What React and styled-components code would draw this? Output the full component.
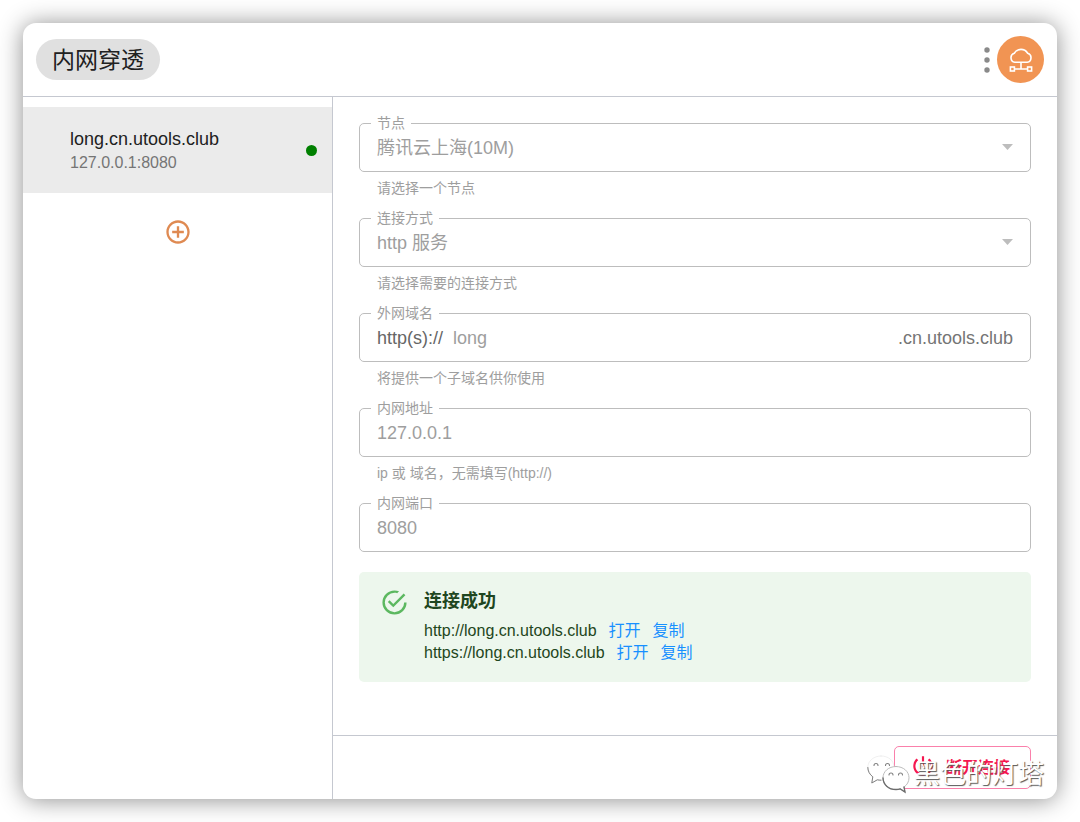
import React from 'react';
import styled, { createGlobalStyle } from 'styled-components';

const GlobalStyle = createGlobalStyle`
  * {
    box-sizing: border-box;
  }

  body {
    margin: 0;
    background: #fff;
    color: #212121;
    font-family: "Liberation Sans", "Noto Sans CJK SC", sans-serif;
    font-size: 16px;
  }

  button, input, select {
    font-family: inherit;
  }
`;

const Page = styled.div`
  min-height: 100vh;
  padding: 23px;
  display: flex;
`;

const Window = styled.div`
  position: relative;
  flex: 1;
  display: flex;
  flex-direction: column;
  background: #fff;
  border-radius: 13px;
  box-shadow: 0 1px 24px rgba(0, 0, 0, 0.45);
`;

const Header = styled.header`
  display: flex;
  justify-content: space-between;
  align-items: center;
  height: 74px;
  padding: 0 13px;
  border-bottom: 1px solid #c5c8d0;
`;

const Title = styled.h1`
  margin: 0;
  padding: 1px 16px 0;
  border-radius: 21px;
  background: #e0e0e0;
  font-size: 23px;
  font-weight: 400;
  line-height: 40px;
`;

const HeaderActions = styled.div`
  display: flex;
  align-items: center;
  gap: 6px;
`;

const IconButton = styled.button`
  display: flex;
  padding: 0;
  border: none;
  background: none;
  color: ${props => props.$color};
  cursor: pointer;
`;

const Avatar = styled.div`
  display: flex;
  align-items: center;
  justify-content: center;
  width: 47px;
  height: 47px;
  border-radius: 50%;
  background: #f19453;
`;

const Body = styled.div`
  flex: 1;
  display: flex;
`;

const Sidebar = styled.nav`
  flex: 0 0 310px;
  display: flex;
  flex-direction: column;
  align-items: center;
  padding-top: 10px;
  border-right: 1px solid #c5c8d0;
`;

const Tunnel = styled.button`
  display: flex;
  justify-content: space-between;
  align-items: center;
  width: 100%;
  height: 86px;
  margin-bottom: 25px;
  padding: 0 15px 0 47px;
  border: none;
  background: #ebebeb;
  color: #212121;
  text-align: left;
  cursor: pointer;
`;

const TunnelName = styled.span`
  display: block;
  font-size: 18px;
  line-height: 26px;
`;

const TunnelTarget = styled.span`
  display: block;
  color: #757575;
  font-size: 16px;
  line-height: 22px;
`;

const StatusDot = styled.span`
  width: 11px;
  height: 11px;
  border-radius: 50%;
  background: #008000;
`;

const Panel = styled.main`
  flex: 1;
  min-width: 0;
  display: flex;
  flex-direction: column;
`;

const Form = styled.form`
  flex: 1;
  padding: 16px 26px;
`;

const Field = styled.div`
  margin-bottom: 10px;
`;

const Outline = styled.fieldset`
  min-width: 0;
  margin: 0;
  padding: 1px 17px 9px 11px;
  border: 1px solid #bdbdbd;
  border-radius: 5px;
`;

const Legend = styled.legend`
  padding: 0 6px;
  color: #9e9e9e;
  font-size: 14px;
  line-height: 20px;
`;

const Control = styled.div`
  display: flex;
  align-items: center;
  gap: 10px;
  padding-left: 6px;
  font-size: 18px;
  line-height: 28px;
`;

const Input = styled.input`
  flex: 1;
  min-width: 0;
  height: 28px;
  padding: 0;
  border: none;
  outline: none;
  background: none;
  color: #9e9e9e;
  font-size: 18px;
`;

const SelectBox = styled.div`
  flex: 1;
  display: grid;
  align-items: center;

  > * {
    grid-area: 1 / 1;
  }

  svg {
    justify-self: end;
    margin-bottom: 2px;
    pointer-events: none;
  }
`;

const Select = styled.select`
  width: 100%;
  height: 28px;
  padding: 0;
  border: none;
  outline: none;
  appearance: none;
  background: none;
  color: #9e9e9e;
  font-size: 18px;
  opacity: 1;
`;

const Affix = styled.span`
  color: ${props => props.$color};
`;

const Helper = styled.p`
  margin: 6px 18px 0;
  color: #9e9e9e;
  font-size: 14px;
  line-height: 20px;
`;

const Alert = styled.section`
  display: flex;
  gap: 15px;
  margin-top: 20px;
  padding: 16px 21px 18px;
  border-radius: 5px;
  background: #edf7ed;
  color: #1e4620;

  > svg {
    flex: none;
    fill: #5cb860;
  }
`;

const AlertTitle = styled.h2`
  margin: 0 0 6px;
  font-size: 18px;
  font-weight: 700;
  line-height: 26px;
`;

const UrlRow = styled.div`
  display: flex;
  gap: 12px;
  line-height: 22px;
`;

const OpenLink = styled.a`
  color: #1890ff;
  text-decoration: none;
`;

const CopyButton = styled.button`
  padding: 0;
  border: none;
  background: none;
  color: #1890ff;
  font-size: 16px;
  line-height: 22px;
  cursor: pointer;
`;

const Footer = styled.footer`
  display: flex;
  justify-content: flex-end;
  align-items: center;
  height: 64px;
  padding: 0 26px;
  border-top: 1px solid #c5c8d0;
`;

const DisconnectButton = styled.button`
  display: flex;
  align-items: center;
  gap: 10px;
  height: 43px;
  padding: 0 20px 3px 15px;
  border: 1px solid #fa80ab;
  border-radius: 5px;
  background: #fff;
  color: #f5174f;
  font-size: 16px;
  font-weight: 700;
  cursor: pointer;

  svg {
    fill: currentColor;
  }
`;

const Watermark = styled.div`
  position: absolute;
  right: 13px;
  bottom: 5px;
  display: flex;
  align-items: center;
  gap: 4px;
  color: #fff;
  font-size: 26px;
  line-height: 34px;
  text-shadow: 1px 1px 1px #555;
  pointer-events: none;
`;

const MoreIcon = () => (
  <svg width="8" height="28" viewBox="0 0 8 28" fill="#8a8a8a">
    <circle cx="4" cy="4" r="2.7" />
    <circle cx="4" cy="14" r="2.7" />
    <circle cx="4" cy="24" r="2.7" />
  </svg>
);

const CloudIcon = () => (
  <svg width="26" height="26" viewBox="0 0 26 26" fill="none" stroke="#fff" strokeWidth="1.6">
    <path d="M6.8 15.3a4.7 4.7 0 0 1-.5-9.1C8 3.600 10.300 2.400 13 2.400s5 1.200 6.700 3.800a4.700 4.700 0 0 1-.5 9.100z" />
    <path d="M13 15.3v6.700M6.4 22h13.2" />
    <rect x="2.4" y="20" width="4" height="4" />
    <rect x="19.6" y="20" width="4" height="4" />
  </svg>
);

const AddIcon = () => (
  <svg width="28" height="28" viewBox="0 0 24 24" fill="currentColor">
    <path d="M13 7h-2v4H7v2h4v4h2v-4h4v-2h-4V7zm-1-5C6.48 2 2 6.48 2 12s4.48 10 10 10 10-4.48 10-10S17.52 2 12 2zm0 18c-4.41 0-8-3.59-8-8s3.59-8 8-8 8 3.59 8 8-3.59 8-8 8z" />
  </svg>
);

const ArrowIcon = () => (
  <svg width="12" height="10" viewBox="0 0 12 10" fill="#bdbdbd">
    <path d="M1 2h11L6.500 8z" />
  </svg>
);

const SuccessIcon = () => (
  <svg width="29" height="29" viewBox="0 0 24 24">
    <path d="M20,12A8,8 0 0,1 12,20A8,8 0 0,1 4,12A8,8 0 0,1 12,4C12.76,4 13.5,4.11 14.2,4.31L15.77,2.74C14.61,2.26 13.34,2 12,2A10,10 0 0,0 2,12A10,10 0 0,0 12,22A10,10 0 0,0 22,12M7.91,10.08L6.5,11.5L11,16L21,6L19.59,4.58L11,13.17L7.91,10.08Z" />
  </svg>
);

const PowerIcon = () => (
  <svg width="26" height="26" viewBox="0 0 24 24">
    <path d="M13 3h-2v10h2V3zm4.83 2.17l-1.42 1.42C17.99 7.86 19 9.81 19 12c0 3.87-3.13 7-7 7s-7-3.13-7-7c0-2.19 1.01-4.14 2.58-5.42L6.17 5.17C4.23 6.82 3 9.26 3 12c0 4.97 4.03 9 9 9s9-4.03 9-9c0-2.74-1.23-5.18-3.17-6.83z" />
  </svg>
);

const WechatIcon = () => (
  <svg width="44" height="40" viewBox="0 0 44 40" fill="none" strokeLinecap="round">
    <path
      d="M15 2C7.600 2 1.800 7 1.800 13.500c0 3.700 1.900 7 5 9.300L5.800 29l5.500-3.200c1.200.3 2.400.4 3.700.4 7.400 0 13-5.500 13-12.700S22.400 2 15 2z"
      fill="#fff"
      stroke="#e6e6e6"
      strokeWidth="0.600"
    />
    <path d="M1.800 13.500c0 3.700 1.900 7 5 9.300L5.800 29l5.500-3.200c1.200.3 2.400.4 3.700.4" stroke="#808080" />
    <path
      d="M30 12.500c-7.500 0-13 5-13 11.300S22.500 35.500 30 35.500c1.500 0 3-.2 4.300-.6L39 38l-1-5c3.200-2.100 5-5.400 5-9.200 0-6.300-5.500-11.300-13-11.300z"
      fill="#fff"
      stroke="#b5b5b5"
      strokeWidth="0.900"
    />
    <path d="M17 23.800C17 30.500 22.500 35.500 30 35.500c1.500 0 3-.2 4.300-.6L39 38l-1-5" stroke="#6b6b6b" strokeWidth="1.300" />
    <path d="M8 11.500a2 2 0 0 1 4 0M19.500 11.500a2 2 0 0 1 4 0M23 21a2 2 0 0 1 4 0M32.500 21a2 2 0 0 1 4 0" stroke="#808080" strokeWidth="1.100" />
  </svg>
);

const TextField = ({ id, label, helper, children }) => (
  <Field>
    <Outline>
      <Legend>
        <label htmlFor={id}>{label}</label>
      </Legend>
      <Control>{children}</Control>
    </Outline>
    {helper && <Helper>{helper}</Helper>}
  </Field>
);

const SelectField = ({ id, label, helper, value }) => (
  <TextField id={id} label={label} helper={helper}>
    <SelectBox>
      <Select id={id} disabled defaultValue={value}>
        <option value={value}>{value}</option>
      </Select>
      <ArrowIcon />
    </SelectBox>
  </TextField>
);

const urls = ['http://long.cn.utools.club', 'https://long.cn.utools.club'];

const App = () => (
  <Page>
    <GlobalStyle />
    <Window>
      <Header>
        <Title>内网穿透</Title>
        <HeaderActions>
          <IconButton type="button" aria-label="更多">
            <MoreIcon />
          </IconButton>
          <Avatar>
            <CloudIcon />
          </Avatar>
        </HeaderActions>
      </Header>
      <Body>
        <Sidebar>
          <Tunnel type="button">
            <span>
              <TunnelName>long.cn.utools.club</TunnelName>
              <TunnelTarget>127.0.0.1:8080</TunnelTarget>
            </span>
            <StatusDot />
          </Tunnel>
          <IconButton type="button" aria-label="添加" $color="#df8a52">
            <AddIcon />
          </IconButton>
        </Sidebar>
        <Panel>
          <Form>
            <SelectField id="node" label="节点" helper="请选择一个节点" value="腾讯云上海(10M)" />
            <SelectField id="protocol" label="连接方式" helper="请选择需要的连接方式" value="http 服务" />
            <TextField id="domain" label="外网域名" helper="将提供一个子域名供你使用">
              <Affix $color="#666">http(s)://</Affix>
              <Input id="domain" disabled defaultValue="long" />
              <Affix $color="#757575">.cn.utools.club</Affix>
            </TextField>
            <TextField id="host" label="内网地址" helper="ip 或 域名，无需填写(http://)">
              <Input id="host" disabled defaultValue="127.0.0.1" />
            </TextField>
            <TextField id="port" label="内网端口">
              <Input id="port" disabled defaultValue="8080" />
            </TextField>
            <Alert>
              <SuccessIcon />
              <div>
                <AlertTitle>连接成功</AlertTitle>
                {urls.map(url => (
                  <UrlRow key={url}>
                    <span>{url}</span>
                    <OpenLink href={url}>打开</OpenLink>
                    <CopyButton type="button">复制</CopyButton>
                  </UrlRow>
                ))}
              </div>
            </Alert>
          </Form>
          <Footer>
            <DisconnectButton type="button">
              <PowerIcon />
              断开连接
            </DisconnectButton>
          </Footer>
        </Panel>
      </Body>
      <Watermark>
        <WechatIcon />
        黑色的灯塔
      </Watermark>
    </Window>
  </Page>
);

export default App;
